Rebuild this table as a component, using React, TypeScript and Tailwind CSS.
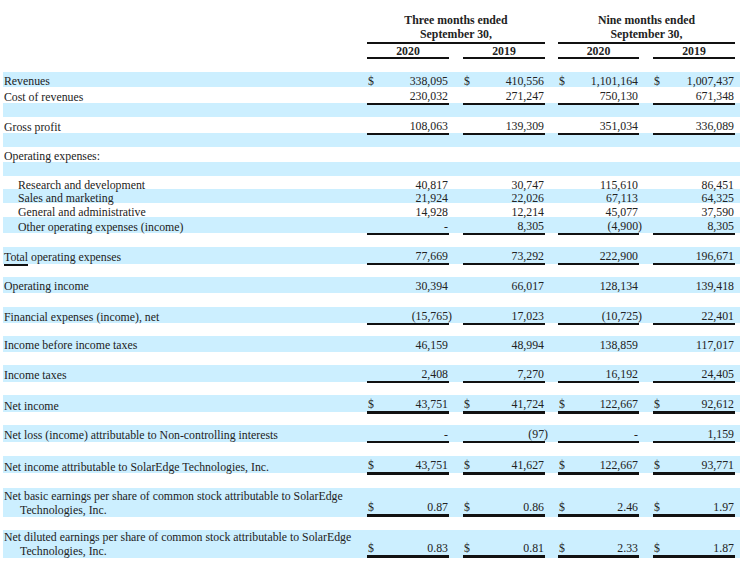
import React from "react";

type Row = {
  h: string;
  b: boolean;
  label?: React.ReactNode;
  label2?: string;
  indent?: boolean;
  vals?: string[];
  d?: boolean;
  ul?: boolean;
  thick?: boolean;
};

const rows: Row[] = [
  { h: "h-[15px]", b: true, label: "Revenues", vals: ["338,095", "410,556", "1,101,164", "1,007,437"], d: true },
  { h: "h-[16px]", b: false, label: "Cost of revenues", vals: ["230,032", "271,247", "750,130", "671,348"], ul: true },
  { h: "h-[14px]", b: true },
  { h: "h-[16px]", b: false, label: "Gross profit", vals: ["108,063", "139,309", "351,034", "336,089"], ul: true },
  { h: "h-[14px]", b: true },
  { h: "h-[15px]", b: false, label: "Operating expenses:" },
  { h: "h-[14px]", b: true },
  { h: "h-[13px]", b: false, label: "Research and development", indent: true, vals: ["40,817", "30,747", "115,610", "86,451"] },
  { h: "h-[14px]", b: true, label: "Sales and marketing", indent: true, vals: ["21,924", "22,026", "67,113", "64,325"] },
  { h: "h-[14px]", b: false, label: "General and administrative", indent: true, vals: ["14,928", "12,214", "45,077", "37,590"] },
  { h: "h-[16px]", b: true, label: "Other operating expenses (income)", indent: true, vals: ["-", "8,305", "(4,900)", "8,305"], ul: true },
  { h: "h-[14px]", b: false },
  {
    h: "h-[17px]",
    b: true,
    label: (
      <span>
        <span className="border-b-2 border-[#111]">Total</span> operating expenses
      </span>
    ),
    vals: ["77,669", "73,292", "222,900", "196,671"],
    ul: true,
  },
  { h: "h-[13px]", b: false },
  { h: "h-[16px]", b: true, label: "Operating income", vals: ["30,394", "66,017", "128,134", "139,418"] },
  { h: "h-[14px]", b: false },
  { h: "h-[16px]", b: true, label: "Financial expenses (income), net", vals: ["(15,765)", "17,023", "(10,725)", "22,401"], ul: true },
  { h: "h-[13px]", b: false },
  { h: "h-[16px]", b: true, label: "Income before income taxes", vals: ["46,159", "48,994", "138,859", "117,017"] },
  { h: "h-[13px]", b: false },
  { h: "h-[17px]", b: true, label: "Income taxes", vals: ["2,408", "7,270", "16,192", "24,405"], ul: true },
  { h: "h-[13px]", b: false },
  { h: "h-[17px]", b: true, label: "Net income", vals: ["43,751", "41,724", "122,667", "92,612"], d: true, ul: true, thick: true },
  { h: "h-[13px]", b: false },
  { h: "h-[17px]", b: true, label: "Net loss (income) attributable to Non-controlling interests", vals: ["-", "(97)", "-", "1,159"], ul: true },
  { h: "h-[14px]", b: false },
  { h: "h-[17px]", b: true, label: "Net income attributable to SolarEdge Technologies, Inc.", vals: ["43,751", "41,627", "122,667", "93,771"], d: true, ul: true, thick: true },
  { h: "h-[15px]", b: false },
  {
    h: "h-[29px]",
    b: true,
    label: "Net basic earnings per share of common stock attributable to SolarEdge",
    label2: "Technologies, Inc.",
    vals: ["0.87", "0.86", "2.46", "1.97"],
    d: true,
    ul: true,
    thick: true,
  },
  { h: "h-[13px]", b: false },
  {
    h: "h-[28px]",
    b: true,
    label: "Net diluted earnings per share of common stock attributable to SolarEdge",
    label2: "Technologies, Inc.",
    vals: ["0.83", "0.81", "2.33", "1.87"],
    d: true,
    ul: true,
    thick: true,
  },
];

const GRID = "grid grid-cols-[364px_82px_14px_82px_13px_81px_14px_82px_2px]";

function ValueCell({ v, r }: { v?: string; r: Row }) {
  const border = r.ul ? (r.thick ? "border-b-[3px] border-[#111]" : "border-b-2 border-[#111]") : "";
  const align = r.label2 ? "items-end" : "items-center pt-[2px]";
  const paren = v && v.endsWith(")");
  return (
    <div className={`flex justify-between ${align} ${border} leading-[14px]`}>
      <span className="pl-[1px]">{r.d && v ? "$" : ""}</span>
      <span className={paren ? "-mr-[3px]" : "pr-[1px]"}>{v}</span>
    </div>
  );
}

export default function App() {
  return (
    <div className="w-[740px] h-[564px] bg-white pl-[3px] font-['Liberation_Serif',serif] text-[11.8px] text-[#222] overflow-hidden">
      {/* Header */}
      <div className={`${GRID} pt-[13px]`}>
        <div />
        <div className="col-span-3 flex flex-col items-center border-b-2 border-[#111] pb-[1px] font-bold leading-[14px]">
          <div>Three months ended</div>
          <div>September 30,</div>
        </div>
        <div />
        <div className="col-span-3 flex flex-col items-center border-b-2 border-[#111] pb-[1px] font-bold leading-[14px]">
          <div>Nine months ended</div>
          <div>September 30,</div>
        </div>
        <div />
      </div>
      <div className={`${GRID} h-[28px]`}>
        <div />
        <div className="h-[15px] border-b-2 border-[#111] text-center font-bold leading-[14px]">2020</div>
        <div />
        <div className="h-[15px] border-b-2 border-[#111] text-center font-bold leading-[14px]">2019</div>
        <div />
        <div className="h-[15px] border-b-2 border-[#111] text-center font-bold leading-[14px]">2020</div>
        <div />
        <div className="h-[15px] border-b-2 border-[#111] text-center font-bold leading-[14px]">2019</div>
        <div />
      </div>

      {/* Body */}
      {rows.map((r, i) => (
        <div key={i} className={`${GRID} ${r.h} ${r.b ? "bg-[#ccefff]" : "bg-white"}`}>
          <div
            className={`flex flex-col justify-center leading-[14px] ${r.label2 ? "" : "pt-[2px]"} ${
              r.indent ? "pl-[15px]" : "pl-[1px]"
            }`}
          >
            {r.label && <div className="whitespace-nowrap">{r.label}</div>}
            {r.label2 && <div className="pl-[16px] whitespace-nowrap">{r.label2}</div>}
          </div>
          {r.vals ? (
            <>
              <ValueCell v={r.vals[0]} r={r} />
              <div />
              <ValueCell v={r.vals[1]} r={r} />
              <div />
              <ValueCell v={r.vals[2]} r={r} />
              <div />
              <ValueCell v={r.vals[3]} r={r} />
              <div />
            </>
          ) : null}
        </div>
      ))}
    </div>
  );
}
